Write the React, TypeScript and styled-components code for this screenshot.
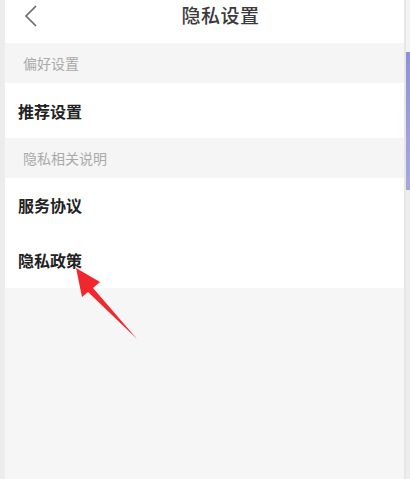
import React from 'react';
import styled, { createGlobalStyle } from 'styled-components';

const GlobalStyle = createGlobalStyle`
  html, body {
    margin: 0;
    padding: 0;
    background: #f6f6f6;
  }
  body {
    font-family: "Noto Sans CJK SC", "Noto Sans", sans-serif;
  }
`;

const Frame = styled.div`
  position: relative;
  display: flex;
  width: 410px;
  height: 479px;
  overflow: hidden;
  background: #f6f6f6;
`;

const LeftGutter = styled.div`
  width: 5px;
  flex-shrink: 0;
  background: #ececec;
`;

const Panel = styled.div`
  flex: 1;
  display: flex;
  flex-direction: column;
  background: #f6f6f6;
`;

const RightEdge = styled.div`
  width: 6px;
  flex-shrink: 0;
  display: flex;
  flex-direction: column;
  border-left: 2px solid #e6e6e6;
  box-sizing: border-box;
  background: #ededed;
`;

const EdgeWhite = styled.div`
  height: 52px;
  background: #f3f3f3;
`;

const EdgePurple = styled.div`
  height: 138px;
  background: linear-gradient(180deg, #8d90d6 0%, #9ea0dc 60%, #a7a7dd 100%);
`;

const Header = styled.div`
  height: 43px;
  display: flex;
  justify-content: center;
  padding-left: 32px;
  position: relative;
  background: #ffffff;
`;

const Back = styled.svg`
  position: absolute;
  left: 16px;
  top: 4px;
`;

const Title = styled.div`
  font-size: 19px;
  line-height: 30px;
  font-weight: 500;
  color: #3a3a3a;
  letter-spacing: 0.5px;
`;

const SectionHead = styled.div`
  height: 40px;
  display: flex;
  align-items: center;
  padding-left: 18px;
  font-size: 14px;
  color: #a9a9a9;
  background: #f5f5f5;
`;

const Row = styled.div<{ $h?: number }>`
  height: ${(p) => p.$h ?? 55}px;
  display: flex;
  align-items: center;
  padding-left: 13px;
  font-size: 16px;
  font-weight: 700;
  color: #222;
  background: #ffffff;
`;

const Arrow = styled.svg`
  position: absolute;
  left: 0;
  top: 0;
  pointer-events: none;
`;

export default function App() {
  return (
    <>
      <GlobalStyle />
      <Frame>
        <LeftGutter />
        <Panel>
          <Header>
            <Back width="20" height="24" viewBox="0 0 20 24">
              <path d="M15 2 L5 12 L15 22" fill="none" stroke="#666" strokeWidth="1.6" />
            </Back>
            <Title>隐私设置</Title>
          </Header>
          <SectionHead>偏好设置</SectionHead>
          <Row>推荐设置</Row>
          <SectionHead>隐私相关说明</SectionHead>
          <Row $h={54}>服务协议</Row>
          <Row $h={56}>隐私政策</Row>
        </Panel>
        <RightEdge>
          <EdgeWhite />
          <EdgePurple />
        </RightEdge>
        <Arrow width="410" height="479" viewBox="0 0 410 479">
          <path d="M76 268 L100 282 L93 288 L137 339 L88 292 L82 297 Z" fill="#f2262d" />
        </Arrow>
      </Frame>
    </>
  );
}
